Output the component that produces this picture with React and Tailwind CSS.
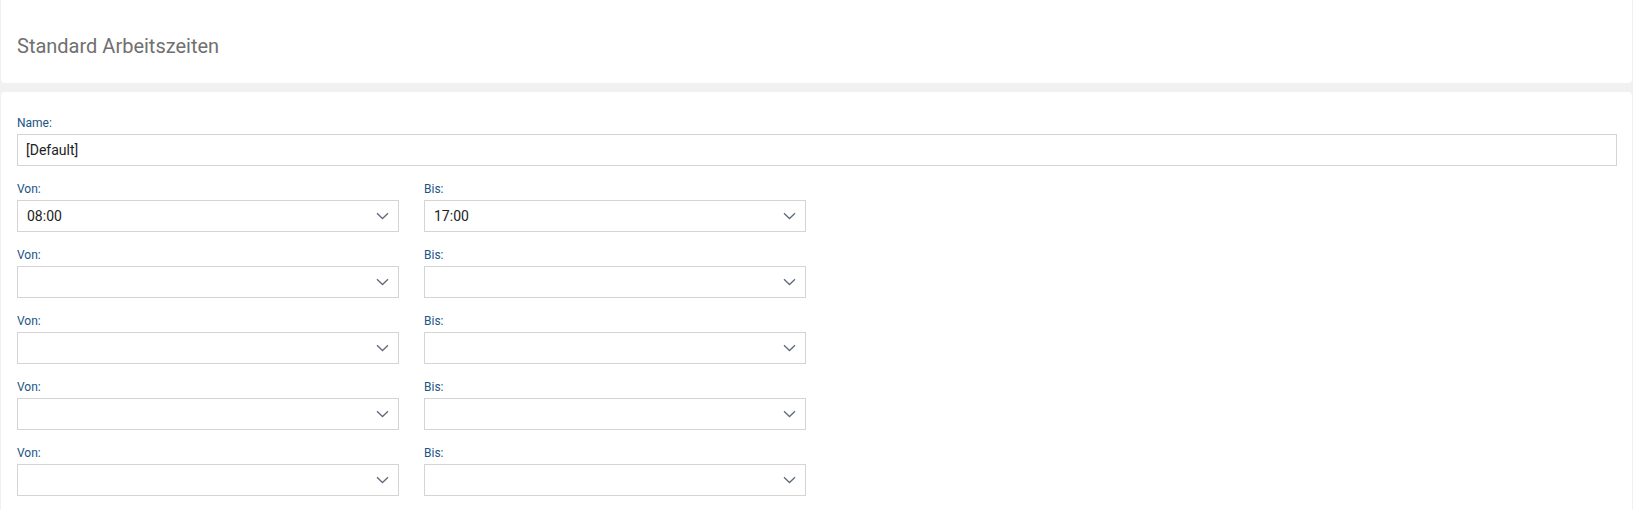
import React from "react";

function Chevron() {
  return (
    <svg width="13" height="8" viewBox="0 0 13 8" className="shrink-0">
      <path d="M1 1.2 L6.5 6.5 L12 1.2" fill="none" stroke="#5f6b7a" strokeWidth="1.3" />
    </svg>
  );
}

function Select({ value }) {
  return (
    <div className="flex h-[32px] w-[382px] items-center justify-between border border-[#d4d4d4] bg-white pl-[9px] pr-[9px] text-[14px] text-[#222]">
      <span>{value}</span>
      <Chevron />
    </div>
  );
}

function Label({ children }) {
  return <div className="mb-[3px] h-[16px] text-[12px] leading-[16px] text-[#1a5585]">{children}</div>;
}

export default function App() {
  const rows = [
    ["08:00", "17:00"],
    ["", ""],
    ["", ""],
    ["", ""],
    ["", ""],
  ];
  return (
    <div className="h-[510px] overflow-hidden bg-[#f1f1f1] px-[1px]" style={{ fontFamily: "Roboto, 'Liberation Sans', sans-serif" }}>
      <div className="flex h-[83px] items-center rounded-b-[4px] bg-white pl-[16px] pt-[8px]">
        <h1 className="text-[20px] leading-[24px] text-[#707070]">Standard Arbeitszeiten</h1>
      </div>
      <div className="mt-[9px] rounded-[4px] bg-white pl-[16px] pr-[15px] pt-[23px] pb-[20px]">
        <Label>Name:</Label>
        <div className="flex h-[32px] items-center border border-[#d4d4d4] pl-[8px] text-[14px] text-[#222]">[Default]</div>
        <div className="mt-[15px] flex flex-col gap-[15px]">
          {rows.map((r, i) => (
            <div key={i} className="flex gap-[25px]">
              <div>
                <Label>Von:</Label>
                <Select value={r[0]} />
              </div>
              <div>
                <Label>Bis:</Label>
                <Select value={r[1]} />
              </div>
            </div>
          ))}
        </div>
      </div>
    </div>
  );
}
